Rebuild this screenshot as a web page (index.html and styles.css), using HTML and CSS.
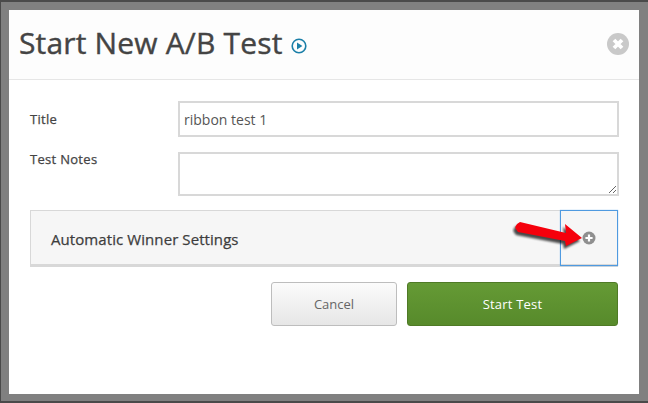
FILE: index.html
```html
<!DOCTYPE html>
<html>
<head>
  <title>Start New A/B Test</title>
  <meta name="viewport" content="width=device-width, initial-scale=1.0">
  <link rel="stylesheet" href="styles.css">
</head>
<body>

  <div class="modal">
    <div class="modal-header">
      <h2>Start New A/B Test</h2>
      <svg class="play-icon" width="16" height="16" viewBox="0 0 16 16">
        <circle cx="8" cy="8" r="6.8" fill="none" stroke="#1b7fa8" stroke-width="1.6"/>
        <path d="M6 4.6 L11.4 8 L6 11.4 Z" fill="#1b7fa8"/>
      </svg>
      <svg class="close-icon" width="22" height="22" viewBox="0 0 22 22">
        <circle cx="11" cy="11" r="11" fill="#c9c9c9"/>
        <path d="M7 7 L15 15 M15 7 L7 15" stroke="#fff" stroke-width="3.8"/>
      </svg>
    </div>

    <div class="modal-body">
      <div class="field title-field">
        <label>Title</label>
        <input type="text" value="ribbon test 1">
      </div>
      <div class="field notes-field">
        <label>Test Notes</label>
        <textarea></textarea>
      </div>

      <div class="panel">
        <span class="panel-title">Automatic Winner Settings</span>
        <div class="panel-toggle">
          <svg width="14" height="14" viewBox="0 0 14 14">
            <circle cx="7" cy="7" r="6.5" fill="#8f8f8f"/>
            <path d="M3.4 7 H10.6 M7 3.4 V10.6" stroke="#fff" stroke-width="2.2"/>
          </svg>
        </div>
      </div>

      <div class="actions">
        <button class="btn-cancel">Cancel</button>
        <button class="btn-start">Start Test</button>
      </div>
    </div>

    <!-- red arrow drawn on top of the screenshot -->
    <svg class="arrow" width="76" height="40" viewBox="0 0 76 40">
      <defs>
        <filter id="soft" x="-20%" y="-40%" width="140%" height="180%">
          <feGaussianBlur stdDeviation="1.2"/>
        </filter>
      </defs>
      <path d="M8 4 L54 15 L53 6 L70 20 L54 28 L53 23 L6 14 Q0 8 8 4 Z" fill="#000" opacity="0.7" filter="url(#soft)" transform="translate(-2 3)"/>
      <path d="M8 4 L54 15 L53 6 L70 20 L54 28 L53 23 L6 14 Q0 8 8 4 Z" fill="#f5000c"/>
    </svg>
  </div>

</body>
</html>
```

FILE: styles.css
```css
html, body {
  margin: 0;
  height: 100%;
}
body {
  box-sizing: border-box;
  height: 403px;
  overflow: hidden;
  padding: 8px 8px 7px 8px;
  background-color: #808080;
  border-top: 2px solid #4a4a4a;
  border-left: 1px solid #4a4a4a;
  border-bottom: 2px solid #4a4a4a;
  font-family: "Open Sans", sans-serif;
  color: #444;
}
.modal {
  position: relative;
  width: 630px;
  height: 384px;
  background-color: #fff;
}
.modal-header {
  box-sizing: border-box;
  height: 70px;
  display: flex;
  align-items: center;
  padding: 0 10px 2px 10px;
  background-color: #fdfdfd;
  border-bottom: 1px solid #e6e6e6;
}
h2 {
  margin: 0 0 1px 0;
  font-size: 30px;
  font-weight: 400;
  letter-spacing: 0.17px;
  -webkit-text-stroke: 0.4px #444;
  color: #444;
  line-height: 1;
}
.play-icon {
  margin: 4px 0 0 8px;
}
.close-icon {
  margin: 0 0 0 auto;
}
.modal-body {
  padding: 21px 20px 0 21px;
}
.field {
  display: flex;
}
.field label {
  flex: none;
  width: 148px;
  font-size: 13px;
  letter-spacing: 0.3px;
  -webkit-text-stroke: 0.25px #444;
  color: #444;
}
.title-field {
  margin-bottom: 15px;
}
.title-field label {
  line-height: 36px;
}
.notes-field {
  margin-bottom: 14px;
}
.notes-field label {
  line-height: 14px;
}
input, textarea {
  box-sizing: border-box;
  flex: none;
  width: 441px;
  margin: 0;
  border: 2px solid #d8d8d8;
  padding: 0 4px;
  font-family: "Open Sans", sans-serif;
  font-size: 14px;
  color: #555;
  background-color: #fff;
  border-radius: 0;
  outline: none;
}
input {
  height: 36px;
}
textarea {
  height: 44px;
  display: block;
}
.panel {
  box-sizing: border-box;
  width: 588px;
  height: 57px;
  display: flex;
  align-items: center;
  justify-content: space-between;
  background-color: #f6f6f6;
  border: 1px solid #d8d8d8;
  border-bottom-width: 3px;
}
.panel-title {
  margin: 2px 0 0 20px;
  font-size: 15px;
  letter-spacing: 0.08px;
  -webkit-text-stroke: 0.25px #3d3d3d;
  color: #3d3d3d;
}
.panel-toggle {
  box-sizing: border-box;
  width: 58px;
  height: 56px;
  margin: -1px -1px -1px 0;
  align-self: flex-start;
  display: flex;
  align-items: center;
  justify-content: center;
  border: 1px solid #4f9ae0;
  box-shadow: 0 0 1px #7db8ea;
  padding-right: 1px;
}
.actions {
  display: flex;
  justify-content: flex-end;
  gap: 10px;
  width: 588px;
  margin-top: 15px;
}
button {
  box-sizing: border-box;
  height: 44px;
  border-radius: 3px;
  font-family: "Open Sans", sans-serif;
  font-size: 13px;
  font-weight: 400;
}
.btn-cancel {
  width: 126px;
  color: #666;
  border: 1px solid #bdbdbd;
  background: linear-gradient(#fbfbfb, #e6e6e6);
}
.btn-start {
  width: 211px;
  color: #fff;
  letter-spacing: 0.2px;
  border: 1px solid #4f7a26;
  background: linear-gradient(#659a35, #578a2b);
}
.arrow {
  position: absolute;
  left: 503px;
  top: 208px;
}
```
